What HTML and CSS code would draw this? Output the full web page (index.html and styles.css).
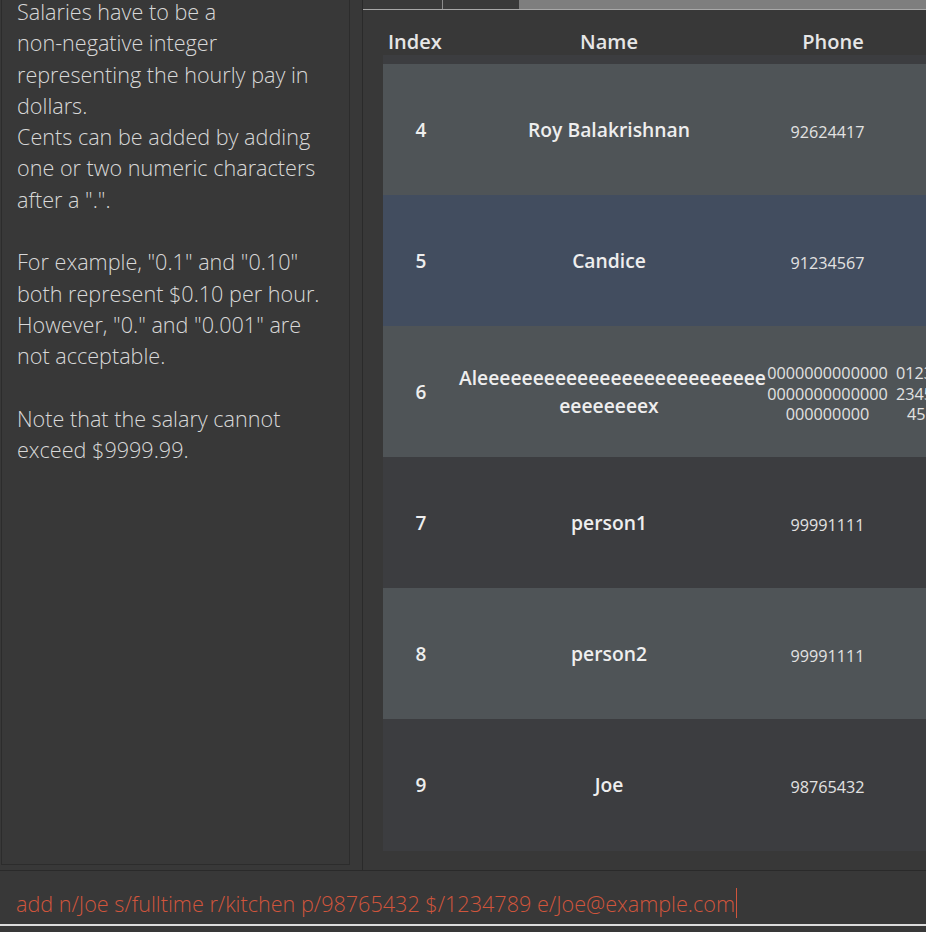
FILE: index.html
```html
<!DOCTYPE html>
<html>
<head>
<meta charset="utf-8">
<link rel="stylesheet" href="styles.css">
</head>
<body>
<div class="app">
  <div class="main">
    <div class="left">
      <p class="help">Salaries have to be a<br>non-negative integer<br>representing the hourly pay in<br>dollars.<br>Cents can be added by adding<br>one or two numeric characters<br>after a ".".<br><br>For example, "0.1" and "0.10"<br>both represent $0.10 per hour.<br>However, "0." and "0.001" are<br>not acceptable.<br><br>Note that the salary cannot<br>exceed $9999.99.</p>
    </div>
    <div class="divider"></div>
    <div class="right">
      <div class="tabs">
        <div class="tab tab-first"></div>
        <div class="tab tab-second"></div>
        <div class="tab-rest"></div>
      </div>
      <div class="table">
        <div class="thead">
          <div class="th th-index">Index</div>
          <div class="th th-name">Name</div>
          <div class="th th-phone">Phone</div>
        </div>
        <div class="tbody">
          <div class="row row-light">
            <div class="td td-index">4</div>
            <div class="td td-name">Roy Balakrishnan</div>
            <div class="td td-phone">92624417</div>
            <div class="td td-extra"></div>
          </div>
          <div class="row row-selected">
            <div class="td td-index">5</div>
            <div class="td td-name">Candice</div>
            <div class="td td-phone">91234567</div>
            <div class="td td-extra"></div>
          </div>
          <div class="row row-light">
            <div class="td td-index">6</div>
            <div class="td td-name">Aleeeeeeeeeeeeeeeeeeeeeeeeee<br>eeeeeeeex</div>
            <div class="td td-phone">0000000000000<br>0000000000000<br>000000000</div>
            <div class="td td-extra">0123456789<br>2345678901<br><span class="indent">456789</span></div>
          </div>
          <div class="row row-dark">
            <div class="td td-index">7</div>
            <div class="td td-name">person1</div>
            <div class="td td-phone">99991111</div>
            <div class="td td-extra"></div>
          </div>
          <div class="row row-light">
            <div class="td td-index">8</div>
            <div class="td td-name">person2</div>
            <div class="td td-phone">99991111</div>
            <div class="td td-extra"></div>
          </div>
          <div class="row row-dark">
            <div class="td td-index">9</div>
            <div class="td td-name">Joe</div>
            <div class="td td-phone">98765432</div>
            <div class="td td-extra"></div>
          </div>
        </div>
      </div>
    </div>
  </div>
  <div class="command">
    <span class="command-text">add n/Joe s/fulltime r/kitchen p/98765432 $/1234789 e/Joe@example.com</span><span class="caret"></span>
  </div>
</div>
</body>
</html>
```

FILE: styles.css
```css
html, body {
  margin: 0;
  padding: 0;
  background: #383838;
}

body {
  width: 926px;
  height: 932px;
  overflow: hidden;
  font-family: "Open Sans", "DejaVu Sans", sans-serif;
}

.app {
  display: flex;
  flex-direction: column;
  height: 932px;
}

.main {
  display: flex;
  height: 871px;
  border-bottom: 1px solid #2a2a2a;
  box-sizing: border-box;
}

.left {
  width: 349px;
  height: 865px;
  box-sizing: border-box;
  border-left: 1px solid #2c2c2c;
  border-right: 1px solid #2c2c2c;
  border-bottom: 1px solid #2c2c2c;
  margin-left: 1px;
  padding-left: 15px;
  overflow: hidden;
  flex-shrink: 0;
}

.help {
  margin: -4px 0 0 0;
  font-size: 21.6px;
  line-height: 31.3px;
  color: #d8d8d8;
  font-weight: 300;
  white-space: nowrap;
}

.divider {
  width: 12px;
  flex-shrink: 0;
  border-right: 1px solid #2a2a2a;
}

.right {
  flex: 1;
  display: flex;
  flex-direction: column;
  overflow: hidden;
  min-width: 0;
}

.tabs {
  display: flex;
  height: 9px;
  border-bottom: 1px solid #a8a8a8;
  flex-shrink: 0;
}

.tab {
  background: #3a3a3a;
  border-right: 1px solid #8c8c8c;
  box-sizing: border-box;
}

.tab-first {
  width: 80px;
}

.tab-second {
  width: 76px;
  border-right: none;
}

.tab-rest {
  flex: 1;
  background: #7e7e7e;
}

.table {
  padding: 18px 0 0 20px;
  display: flex;
  flex-direction: column;
  width: 760px;
}

.thead {
  display: flex;
  height: 27px;
  align-items: center;
  color: #e6e6e6;
  font-size: 20px;
  font-weight: 600;
}

.th-index {
  width: 76px;
  padding-left: 5px;
  box-sizing: border-box;
}

.th-name {
  width: 300px;
  text-align: center;
}

.th-phone {
  width: 148px;
  text-align: center;
}

.tbody {
  background: #3c3d40;
  padding-top: 9px;
  height: 796px;
  box-sizing: border-box;
}

.row {
  display: flex;
  height: 131px;
  align-items: center;
  color: #eeeeee;
}

.row-light {
  background: #4f5457;
}

.row-selected {
  background: #424d5f;
}

.row-dark {
  background: #3c3d40;
}

.td-index {
  width: 76px;
  text-align: center;
  font-size: 19px;
  font-weight: 600;
}

.td-name {
  width: 300px;
  text-align: center;
  font-size: 19.3px;
  font-weight: 600;
  line-height: 28px;
  white-space: nowrap;
}

.td-phone {
  width: 137px;
  padding-top: 5px;
  text-align: center;
  font-size: 16.2px;
  line-height: 20.5px;
  color: #e2e2e2;
  white-space: nowrap;
}

.td-extra {
  width: 110px;
  padding-top: 5px;
  text-align: left;
  font-size: 16.2px;
  line-height: 20.5px;
  color: #e2e2e2;
  white-space: nowrap;
}

.indent {
  padding-left: 11px;
}

.command {
  height: 54px;
  display: flex;
  align-items: center;
  padding: 10px 0 0 16px;
  border-bottom: 2px solid #dcdcdc;
  box-sizing: border-box;
  margin-top: 1px;
}

.command-text {
  color: #d0553c;
  font-size: 21.6px;
  font-weight: 300;
  white-space: nowrap;
}

.caret {
  display: inline-block;
  width: 1px;
  height: 30px;
  background: #d0553c;
  margin-left: 1px;
}
```
